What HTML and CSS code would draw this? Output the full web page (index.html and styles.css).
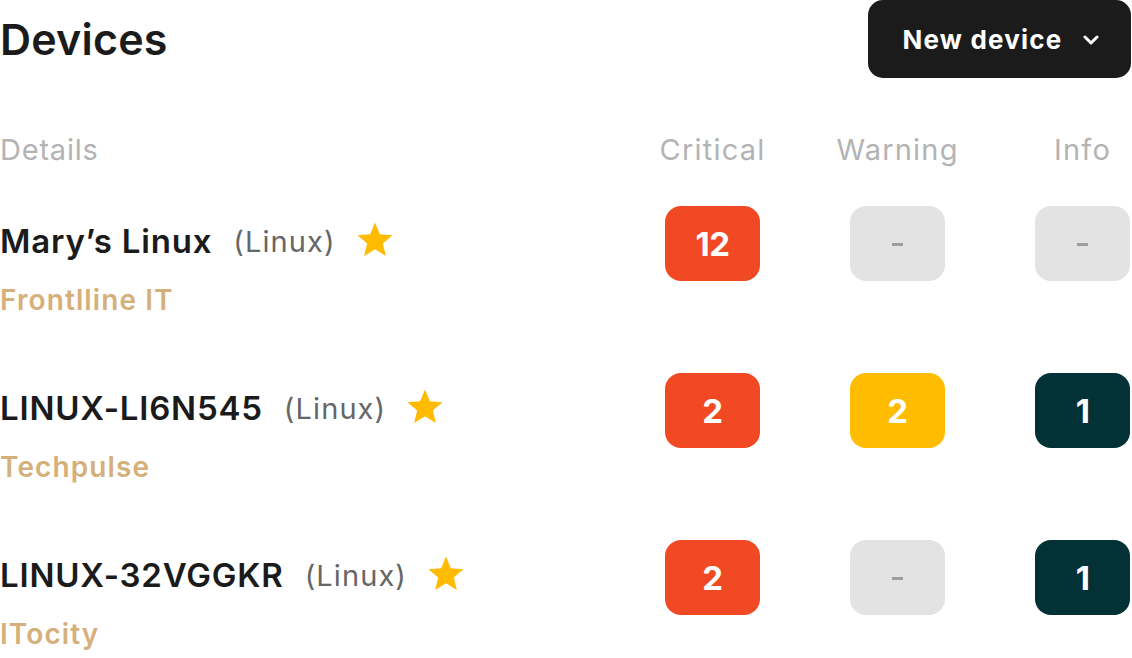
FILE: index.html
```html
<!DOCTYPE html>
<html lang="en">
<head>
<meta charset="utf-8">
<title>Devices</title>
<link rel="stylesheet" href="styles.css">
</head>
<body>
<div class="page">
  <header class="topbar">
    <h1 class="title">Devices</h1>
    <button class="new-btn">
      <span>New device</span>
      <svg class="chev" viewBox="0 0 16 10" width="16" height="10"><path d="M2 2 L8 8 L14 2" fill="none" stroke="#fff" stroke-width="3" stroke-linecap="round" stroke-linejoin="round"/></svg>
    </button>
  </header>

  <div class="table">
    <div class="thead">
      <div class="th th-left">Details</div>
      <div class="th">Critical</div>
      <div class="th">Warning</div>
      <div class="th">Info</div>
    </div>

    <div class="row">
      <div class="details">
        <div class="name-line">
          <span class="name">Mary’s Linux</span>
          <span class="os">(Linux)</span>
          <svg class="star" viewBox="0 0 24 24" width="40" height="40"><path d="M12 1.5 L14.9 8.6 L22.5 9.2 L16.7 14.1 L18.5 21.6 L12 17.6 L5.5 21.6 L7.3 14.1 L1.5 9.2 L9.1 8.6 Z" fill="#ffbb00"/></svg>
        </div>
        <div class="company">Frontlline IT</div>
      </div>
      <div class="cell"><div class="badge red">12</div></div>
      <div class="cell"><div class="badge empty"><span class="dash"></span></div></div>
      <div class="cell"><div class="badge empty"><span class="dash"></span></div></div>
    </div>

    <div class="row">
      <div class="details">
        <div class="name-line">
          <span class="name">LINUX-LI6N545</span>
          <span class="os">(Linux)</span>
          <svg class="star" viewBox="0 0 24 24" width="40" height="40"><path d="M12 1.5 L14.9 8.6 L22.5 9.2 L16.7 14.1 L18.5 21.6 L12 17.6 L5.5 21.6 L7.3 14.1 L1.5 9.2 L9.1 8.6 Z" fill="#ffbb00"/></svg>
        </div>
        <div class="company">Techpulse</div>
      </div>
      <div class="cell"><div class="badge red">2</div></div>
      <div class="cell"><div class="badge yellow">2</div></div>
      <div class="cell"><div class="badge dark">1</div></div>
    </div>

    <div class="row">
      <div class="details">
        <div class="name-line">
          <span class="name">LINUX-32VGGKR</span>
          <span class="os">(Linux)</span>
          <svg class="star" viewBox="0 0 24 24" width="40" height="40"><path d="M12 1.5 L14.9 8.6 L22.5 9.2 L16.7 14.1 L18.5 21.6 L12 17.6 L5.5 21.6 L7.3 14.1 L1.5 9.2 L9.1 8.6 Z" fill="#ffbb00"/></svg>
        </div>
        <div class="company">ITocity</div>
      </div>
      <div class="cell"><div class="badge red">2</div></div>
      <div class="cell"><div class="badge empty"><span class="dash"></span></div></div>
      <div class="cell"><div class="badge dark">1</div></div>
    </div>
  </div>
</div>
</body>
</html>
```

FILE: styles.css
```css
* { box-sizing: border-box; }
html, body { margin: 0; padding: 0; background: #fff; }
body {
  font-family: Inter, "Noto Sans", "Liberation Sans", sans-serif;
  color: #1b1b1b;
  width: 1132px;
  height: 658px;
  overflow: hidden;
}
.page { padding-right: 1px; }
.topbar {
  display: flex;
  justify-content: space-between;
  align-items: center;
  height: 78px;
}
.title {
  margin: 0;
  font-size: 43px;
  font-weight: 600;
  letter-spacing: 0.2px;
  line-height: 1;
  color: #1b1b1b;
}
.new-btn {
  width: 263px;
  height: 78px;
  border: none;
  border-radius: 15px;
  background: #1b1b1b;
  color: #fff;
  font-family: inherit;
  font-size: 26px;
  font-weight: 700;
  letter-spacing: 1.2px;
  display: flex;
  align-items: center;
  justify-content: center;
  gap: 20px;
  padding: 0 0 0 2px;
}
.chev { display: block; margin-top: 2px; }

.table { margin-top: 52px; }
.thead, .row {
  display: grid;
  grid-template-columns: 1fr 95px 95px 95px;
  column-gap: 90px;
  padding-right: 1px;
}
.th {
  font-size: 29px;
  font-weight: 400;
  color: #b3b3b3;
  line-height: 40px;
  display: flex;
  justify-content: center;
  white-space: nowrap;
  letter-spacing: 1.2px;
}
.th-left { justify-content: flex-start; letter-spacing: 0.8px; }
.thead { margin-bottom: 36px; }

.row { align-items: start; margin-bottom: 53px; }
.row:last-child { margin-bottom: 0; }
.details { display: flex; flex-direction: column; }
.name-line {
  height: 70px;
  display: flex;
  align-items: center;
}
.name {
  font-size: 33px;
  font-weight: 600;
  letter-spacing: 0.8px;
  color: #1b1b1b;
}
.os {
  font-size: 29px;
  font-weight: 400;
  color: #666;
  margin-left: 21px;
  letter-spacing: 1.1px;
}
.star { margin-left: 19px; margin-bottom: 2px; }
.company {
  font-size: 28px;
  font-weight: 600;
  color: #d5b07b;
  line-height: 40px;
  padding-top: 4px;
  letter-spacing: 1.1px;
  height: 44px;
}
.cell { display: flex; justify-content: center; }
.badge {
  width: 95px;
  height: 75px;
  border-radius: 16px;
  display: flex;
  align-items: center;
  justify-content: center;
  font-size: 33px;
  font-weight: 700;
  color: #fff;
  letter-spacing: -0.5px;
}
.red { background: #f04923; }
.yellow { background: #ffbc00; }
.dark { background: #023136; }
.empty { background: #e3e3e3; }
.dash {
  display: block;
  width: 11px;
  height: 3px;
  background: #9e9e9e;
  margin-top: 2px;
}
```
